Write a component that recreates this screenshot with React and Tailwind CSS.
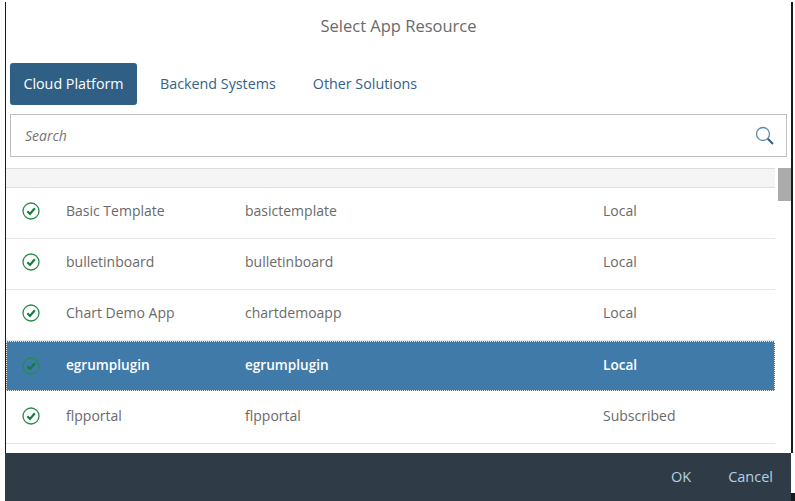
const rows = [
  ["Basic Template", "basictemplate", "Local"],
  ["bulletinboard", "bulletinboard", "Local"],
  ["Chart Demo App", "chartdemoapp", "Local"],
  ["egrumplugin", "egrumplugin", "Local", true],
  ["flpportal", "flpportal", "Subscribed"],
];

function Check() {
  return (
    <svg width="18" height="18" viewBox="0 0 18 18" fill="none">
      <circle cx="9" cy="9" r="8" stroke="#2b8a4b" strokeWidth="1.3" />
      <path d="M5.4 9.2 L8 11.9 L12.8 6.2" stroke="#107e3e" strokeWidth="2.2" />
    </svg>
  );
}

export default function App() {
  return (
    <div className="w-[795px] h-[501px] bg-white overflow-hidden flex flex-col font-['Open_Sans','Noto_Sans',sans-serif] text-[14px]">
      <div className="flex-1 min-h-0 mt-[2px] ml-[5px] mr-[2px] border-l-[1px] border-r-[2px] border-[#1a1a1a] flex flex-col">
        <div className="h-[49px] flex items-center justify-center text-[16.5px] text-[#6a6a6a]">Select App Resource</div>
        <div className="h-[63px] pt-[3px] flex items-center pl-[4px] gap-[23px] text-[14.3px] text-[#346187]">
          <div className="w-[127px] h-[42px] rounded-[3px] bg-[#2f5f85] text-white flex items-center justify-center">Cloud Platform</div>
          <div>Backend Systems</div>
          <div className="ml-[14px]">Other Solutions</div>
        </div>
        <div className="mx-[4px] h-[43px] border border-[#bfbfbf] flex items-center justify-between pl-[14px] pr-[11px] italic text-[#757575]">
          <span>Search</span>
          <svg width="20" height="20" viewBox="0 0 20 20" fill="none">
            <circle cx="8" cy="8" r="6.5" stroke="#5f8aa8" strokeWidth="1.3" />
            <path d="M12.8 12.8 L18 18" stroke="#2f5f85" strokeWidth="2" />
          </svg>
        </div>
        <div className="flex-1 min-h-0 mt-[11px] flex">
          <div className="flex-1 min-w-0 flex flex-col">
            <div className="h-[20px] bg-[#f5f5f5] border-y border-[#dddddd]" />
            {rows.map(([a, b, c, sel]) => (
              <div key={a} className={sel
                ? "h-[50px] mb-[2px] pb-[1px] flex items-center bg-[#3f7aa8] text-white text-[13.6px] font-semibold outline-1 outline-dotted outline-[#e8e8e8] -outline-offset-1"
                : "h-[51px] pb-[5px] flex items-center border-b border-[#e5e5e5] text-[#6a6a6a]"}>
                <div className="w-[60px] pl-[16px] flex items-center"><Check /></div>
                <div className="w-[179px]">{a}</div>
                <div className="w-[358px]">{b}</div>
                <div>{c}</div>
              </div>
            ))}
          </div>
          <div className="w-[13px] ml-[3px]">
            <div className="w-[13px] h-[33px] bg-[#ababab]" />
          </div>
        </div>
      </div>
      <div className="h-[48px] shrink-0 flex">
        <div className="flex-1 ml-[5px] bg-[#2f3c48] flex items-center justify-end pr-[18px] gap-[37px] text-[14.5px] text-[#b5d0e4]">
          <span>OK</span>
          <span>Cancel</span>
        </div>
        <div className="w-[4px] h-[8px] self-end bg-[#1a1a1a]" />
      </div>
    </div>
  );
}
